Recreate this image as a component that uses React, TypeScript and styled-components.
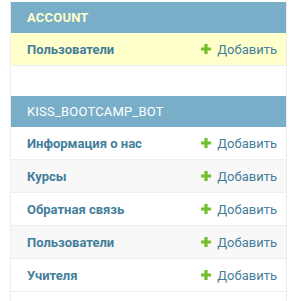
import styled, { createGlobalStyle } from "styled-components";

const GlobalStyle = createGlobalStyle`
  body {
    margin: 0;
    background: #fff;
    font-family: Roboto, "Liberation Sans", sans-serif;
  }
`;

const Sidebar = styled.nav`
  margin-left: 10px;
  width: 275px;
  height: 299px;
  padding-top: 2px;
  border-left: 1px solid #ececec;
  border-right: 1px solid #ececec;
  overflow: hidden;
`;

const Module = styled.div`
  margin-bottom: 30px;
  &:last-child {
    margin-bottom: 0;
  }
`;

const Caption = styled.div<{ $current?: boolean }>`
  height: 31px;
  display: flex;
  align-items: center;
  padding-left: 16px;
  background: #79aec8;
  color: ${(p) => (p.$current ? "#ffc" : "#fff")};
  font-size: 13px;
  font-weight: ${(p) => (p.$current ? 700 : 400)};
  letter-spacing: 0.2px;
`;

const Row = styled.div<{ $current?: boolean; $even?: boolean }>`
  height: 32px;
  display: flex;
  align-items: center;
  justify-content: space-between;
  padding: 0 9px 0 16px;
  border-bottom: 1px solid #eee;
  background: ${(p) => (p.$current ? "#ffc" : p.$even ? "#f8f8f8" : "#fff")};
`;

const ModelName = styled.span`
  color: #447e9b;
  font-size: 13px;
  font-weight: 700;
`;

const AddLink = styled.span`
  display: flex;
  align-items: center;
  gap: 6px;
  color: #447e9b;
  font-size: 13px;
`;

const PlusIcon = () => (
  <svg width="10" height="10" viewBox="0 0 10 10">
    <path d="M3.4 0h3.2v3.4H10v3.2H6.6V10H3.4V6.6H0V3.4h3.4z" fill="#70bf2b" />
  </svg>
);

const modules = [
  { name: "ACCOUNT", current: true, models: ["Пользователи"] },
  {
    name: "KISS_BOOTCAMP_BOT",
    current: false,
    models: ["Информация о нас", "Курсы", "Обратная связь", "Пользователи", "Учителя"],
  },
];

export default function App() {
  return (
    <>
      <GlobalStyle />
      <Sidebar>
        {modules.map((m) => (
          <Module key={m.name}>
            <Caption $current={m.current}>{m.name}</Caption>
            {m.models.map((model, i) => (
              <Row key={model} $current={m.current} $even={i % 2 === 1}>
                <ModelName>{model}</ModelName>
                <AddLink>
                  <PlusIcon />
                  Добавить
                </AddLink>
              </Row>
            ))}
          </Module>
        ))}
      </Sidebar>
    </>
  );
}
